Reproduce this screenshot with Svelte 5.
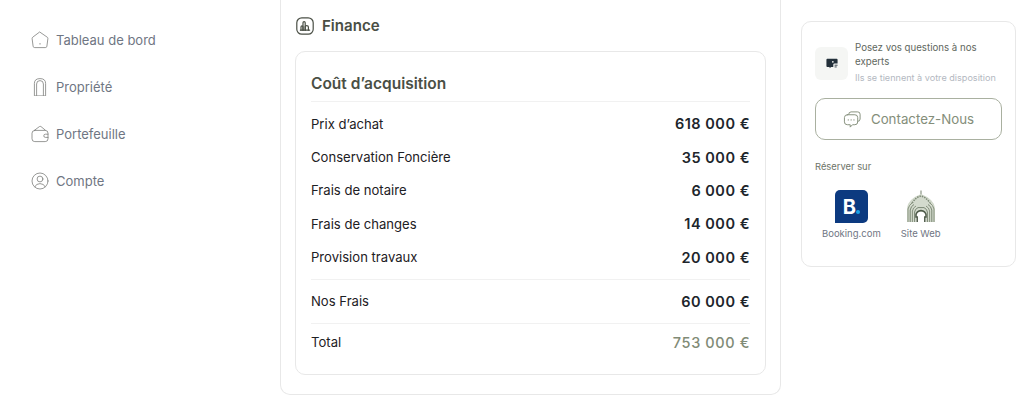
<script lang="ts">
  const navItems = [
    { label: 'Tableau de bord', icon: 'home' },
    { label: 'Propriété', icon: 'door' },
    { label: 'Portefeuille', icon: 'wallet' },
    { label: 'Compte', icon: 'user' }
  ];

  const costs = [
    { label: 'Prix d’achat', value: '618 000 €' },
    { label: 'Conservation Foncière', value: '35 000 €' },
    { label: 'Frais de notaire', value: '6 000 €' },
    { label: 'Frais de changes', value: '14 000 €' },
    { label: 'Provision travaux', value: '20 000 €' }
  ];
</script>

<div class="page">
  <nav class="sidebar">
    {#each navItems as item}
      <a class="nav-item" href="#{item.icon}">
        <svg class="nav-icon" viewBox="0 0 18 18" fill="none" stroke="#7d7f7c" stroke-width="0.8" stroke-linejoin="round" stroke-linecap="round">
          {#if item.icon === 'home'}
            <path d="M9 1.2 L16.4 6.3 Q17 6.8 16.9 7.6 L15.9 15.2 Q15.7 16.6 14.3 16.6 H3.7 Q2.3 16.6 2.1 15.2 L1.1 7.6 Q1 6.8 1.6 6.3 Z" />
            <path d="M9 12.4 V13.2" />
          {:else if item.icon === 'door'}
            <path d="M3.4 17.5 V5.5 Q3.4 0.6 9 0.6 Q14.6 0.6 14.6 5.5 V17.5 Z" />
            <path d="M5.6 17.5 V6 Q5.6 2.6 9 2.6 Q12.4 2.6 12.4 6 V17.5" />
          {:else if item.icon === 'wallet'}
            <rect x="1" y="5.4" width="16" height="11.2" rx="2.8" />
            <path d="M3.6 5.2 L8.4 1.6 Q9.2 1 10 1.6 L14.4 5.2" />
            <path d="M17 9.2 H14.4 Q12.8 9.2 12.8 10.8 Q12.8 12.4 14.4 12.4 H17" />
          {:else}
            <circle cx="9" cy="9" r="8" />
            <circle cx="9" cy="7" r="2.9" />
            <path d="M3.8 14.8 Q5 11.6 9 11.6 Q13 11.6 14.2 14.8" />
          {/if}
        </svg>
        <span>{item.label}</span>
      </a>
    {/each}
  </nav>

  <main class="finance">
    <h2 class="finance-title">
      <svg class="finance-icon" viewBox="0 0 18 18" fill="none" stroke="#4a4f45" stroke-width="1.2" stroke-linejoin="round" stroke-linecap="round">
        <rect x="0.8" y="0.8" width="16.4" height="16.4" rx="5" />
        <path d="M4.4 13.2 H13.6" />
        <path d="M5 13.2 V10 Q5 8.8 6 8.8 Q7 8.8 7 10 V13.2" />
        <path d="M7 13.2 V5.8 Q7 4.6 8.1 4.6 Q9.2 4.6 9.2 5.8 V13.2" />
        <path d="M9.2 13.2 V9.6 Q9.2 8.6 10.6 8.6 Q12.4 8.6 12.4 10 V13.2" />
      </svg>
      Finance
    </h2>

    <section class="cost-card">
      <h3 class="cost-title">Coût d’acquisition</h3>
      <div class="cost-list">
        {#each costs as row}
          <div class="row">
            <span>{row.label}</span>
            <strong>{row.value}</strong>
          </div>
        {/each}
      </div>
      <div class="row fees">
        <span>Nos Frais</span>
        <strong>60 000 €</strong>
      </div>
      <div class="row total">
        <span>Total</span>
        <strong>753 000 €</strong>
      </div>
    </section>
  </main>

  <aside class="contact">
    <div class="experts">
      <div class="experts-icon">
        <svg viewBox="0 0 14 12" width="12" height="11">
          <path d="M1.5 0.5 H12.5 Q13.5 0.5 13.5 1.5 V6 H10 Q8.5 6 8.5 7.5 V10 H6 L4.2 11.6 V10 H1.5 Q0.5 10 0.5 9 V1.5 Q0.5 0.5 1.5 0.5 Z" fill="#23303a" />
          <circle cx="8" cy="4" r="1" fill="#f5f6f4" />
          <path d="M10 8 H13.5 M10 10 H12.5" stroke="#23303a" stroke-width="1" />
        </svg>
      </div>
      <div class="experts-text">
        <p class="experts-question">Posez vos questions à nos experts</p>
        <p class="experts-note">Ils se tiennent à votre disposition</p>
      </div>
    </div>

    <button class="contact-btn" type="button">
      <svg viewBox="0 0 20 20" width="19" height="19" fill="none" stroke="#848e7a" stroke-width="1" stroke-linejoin="round" stroke-linecap="round">
        <path d="M6 4.5 Q6 2 8.5 2 H15.5 Q18 2 18 4.5 V9.5 Q18 12 15.5 12" />
        <path d="M4.5 5 H12.5 Q15.5 5 15.5 8 V12.5 Q15.5 15.5 12.5 15.5 H10 L7.6 18 V15.5 H4.5 Q1.5 15.5 1.5 12.5 V8 Q1.5 5 4.5 5 Z" />
        <path d="M5.5 10.4 H5.6 M8.5 10.4 H8.6 M11.5 10.4 H11.6" stroke-width="1.2" />
      </svg>
      Contactez-Nous
    </button>

    <p class="book-label">Réserver sur</p>
    <div class="book-links">
      <a class="book-link" href="#booking">
        <span class="booking-logo">B<i></i></span>
        <span>Booking.com</span>
      </a>
      <a class="book-link" href="#site">
        <svg class="site-logo" viewBox="0 0 30 33" fill="none">
          <path d="M15 0.5 V5" stroke="#8a9484" stroke-width="1.2" />
          <path d="M1 32 V18 Q2 9 15 4 Q28 9 29 18 V32 H20 V22 H10 V32 Z" fill="#d3dacd" />
          <path d="M6 13 Q10 7 15 6 Q20 7 24 13" stroke="#7f8b78" stroke-width="1.6" stroke-dasharray="1.5 1" />
          <path d="M2 32 V19 Q3 15 6 13 M24 13 Q27 15 28 19 V32" stroke="#87927f" stroke-width="1" />
          <path d="M4.2 32 V20 Q5 16 8 14.5 M22 14.5 Q25 16 25.8 20 V32" stroke="#7a8673" stroke-width="1" />
          <path d="M6.4 32 V21 Q7 17.5 10 16 M20 16 Q23 17.5 23.6 21 V32" stroke="#87927f" stroke-width="1" />
          <path d="M8.6 32 V22 Q9 19 12 17.6 H18 Q21 19 21.4 22 V32" stroke="#7a8673" stroke-width="1" />
          <path d="M11.2 32 V27 H10 V24.5 Q10.6 21 15 20.4 Q19.4 21 20 24.5 V27 H18.8 V32" stroke="#4e5a49" stroke-width="1.5" />
        </svg>
        <span>Site Web</span>
      </a>
    </div>
  </aside>
</div>

<style>
  :global(body) {
    background: #fff;
    font-family: 'Inter', 'Noto Sans', sans-serif;
  }

  .page {
    display: flex;
    align-items: flex-start;
    height: 401px;
    overflow: hidden;
    box-sizing: border-box;
  }

  .sidebar {
    width: 280px;
    flex-shrink: 0;
    box-sizing: border-box;
    padding: 31px 0 0 31px;
    display: flex;
    flex-direction: column;
    gap: 29px;
  }

  .nav-item {
    display: flex;
    align-items: center;
    gap: 7px;
    height: 18px;
    color: #6f7683;
    font-size: 13px;
    text-decoration: none;
  }

  .nav-icon {
    width: 18px;
    height: 18px;
  }

  .finance {
    width: 501px;
    height: 395px;
    flex-shrink: 0;
    box-sizing: border-box;
    border: 1px solid #e8e8e8;
    border-top: none;
    border-radius: 0 0 10px 10px;
    padding: 17px 14px 0;
  }

  .finance-title {
    display: flex;
    align-items: center;
    gap: 8px;
    margin: 0 0 16px;
    font-size: 15.1px;
    font-weight: 600;
    line-height: 18px;
    color: #4a4f45;
  }

  .finance-icon {
    width: 18px;
    height: 18px;
    margin-left: 1px;
  }

  .cost-card {
    box-sizing: border-box;
    height: 324px;
    border: 1px solid #e8e8e8;
    border-radius: 10px;
    padding: 0 15px;
  }

  .cost-title {
    margin: 0;
    height: 50px;
    line-height: 63px;
    box-sizing: border-box;
    font-size: 15.5px;
    font-weight: 600;
    color: #4a4f45;
    border-bottom: 1px solid #f1f1f1;
  }

  .cost-list {
    display: flex;
    flex-direction: column;
    padding: 5px 0;
    border-bottom: 1px solid #f1f1f1;
  }

  .row {
    display: flex;
    justify-content: space-between;
    align-items: center;
    height: 33.4px;
    font-size: 13.1px;
    color: #1d2024;
  }

  .row strong {
    font-size: 14.5px;
    font-weight: 600;
    letter-spacing: 0.5px;
    color: #20252b;
  }

  .fees {
    height: 43px;
    border-bottom: 1px solid #f1f1f1;
  }

  .total {
    height: 37px;
  }

  .total strong {
    font-weight: 500;
    letter-spacing: 0.6px;
    color: #818b76;
  }

  .contact {
    width: 215px;
    height: 246px;
    margin: 21px 0 0 20px;
    flex-shrink: 0;
    box-sizing: border-box;
    border: 1px solid #e8e8e8;
    border-radius: 10px;
    padding: 19px 13px 0;
  }

  .experts {
    display: flex;
    align-items: flex-start;
    gap: 7px;
    height: 48px;
  }

  .experts-icon {
    width: 33px;
    height: 33px;
    margin-top: 6px;
    flex-shrink: 0;
    display: flex;
    align-items: center;
    justify-content: center;
    background: #f5f6f4;
    border-radius: 6px;
  }

  .experts-text p {
    margin: 0;
  }

  .experts-question {
    font-size: 9.7px;
    line-height: 13.5px;
    color: #5f6860;
  }

  .experts-note {
    margin-top: 2px !important;
    font-size: 9.1px;
    line-height: 15px;
    color: #b3b8c1;
    white-space: nowrap;
  }

  .contact-btn {
    display: flex;
    align-items: center;
    justify-content: center;
    gap: 9px;
    width: 187px;
    height: 42px;
    margin-top: 9px;
    background: #fff;
    border: 1px solid #a9b0a0;
    border-radius: 10px;
    color: #848e7a;
    font-family: inherit;
    font-size: 13.3px;
  }

  .book-label {
    margin: 21px 0 0;
    font-size: 9.4px;
    line-height: 12px;
    color: #6d7468;
  }

  .book-links {
    display: flex;
    gap: 20px;
    margin-top: 17px;
    padding-left: 7px;
  }

  .book-link {
    display: flex;
    flex-direction: column;
    align-items: center;
    gap: 5px;
    font-size: 9.5px;
    line-height: 12px;
    color: #6f7683;
    text-decoration: none;
  }

  .booking-logo {
    position: relative;
    display: flex;
    align-items: center;
    justify-content: center;
    width: 33px;
    height: 33px;
    padding-right: 4px;
    box-sizing: border-box;
    background: #0c3a80;
    border-radius: 5px 5px 5px 0;
    color: #fff;
    font-size: 20px;
    font-weight: 700;
  }

  .booking-logo i {
    position: absolute;
    left: 21px;
    top: 20px;
    width: 4px;
    height: 4px;
    border-radius: 50%;
    background: #1aa3e8;
  }

  .site-logo {
    width: 30px;
    height: 33px;
  }
</style>
